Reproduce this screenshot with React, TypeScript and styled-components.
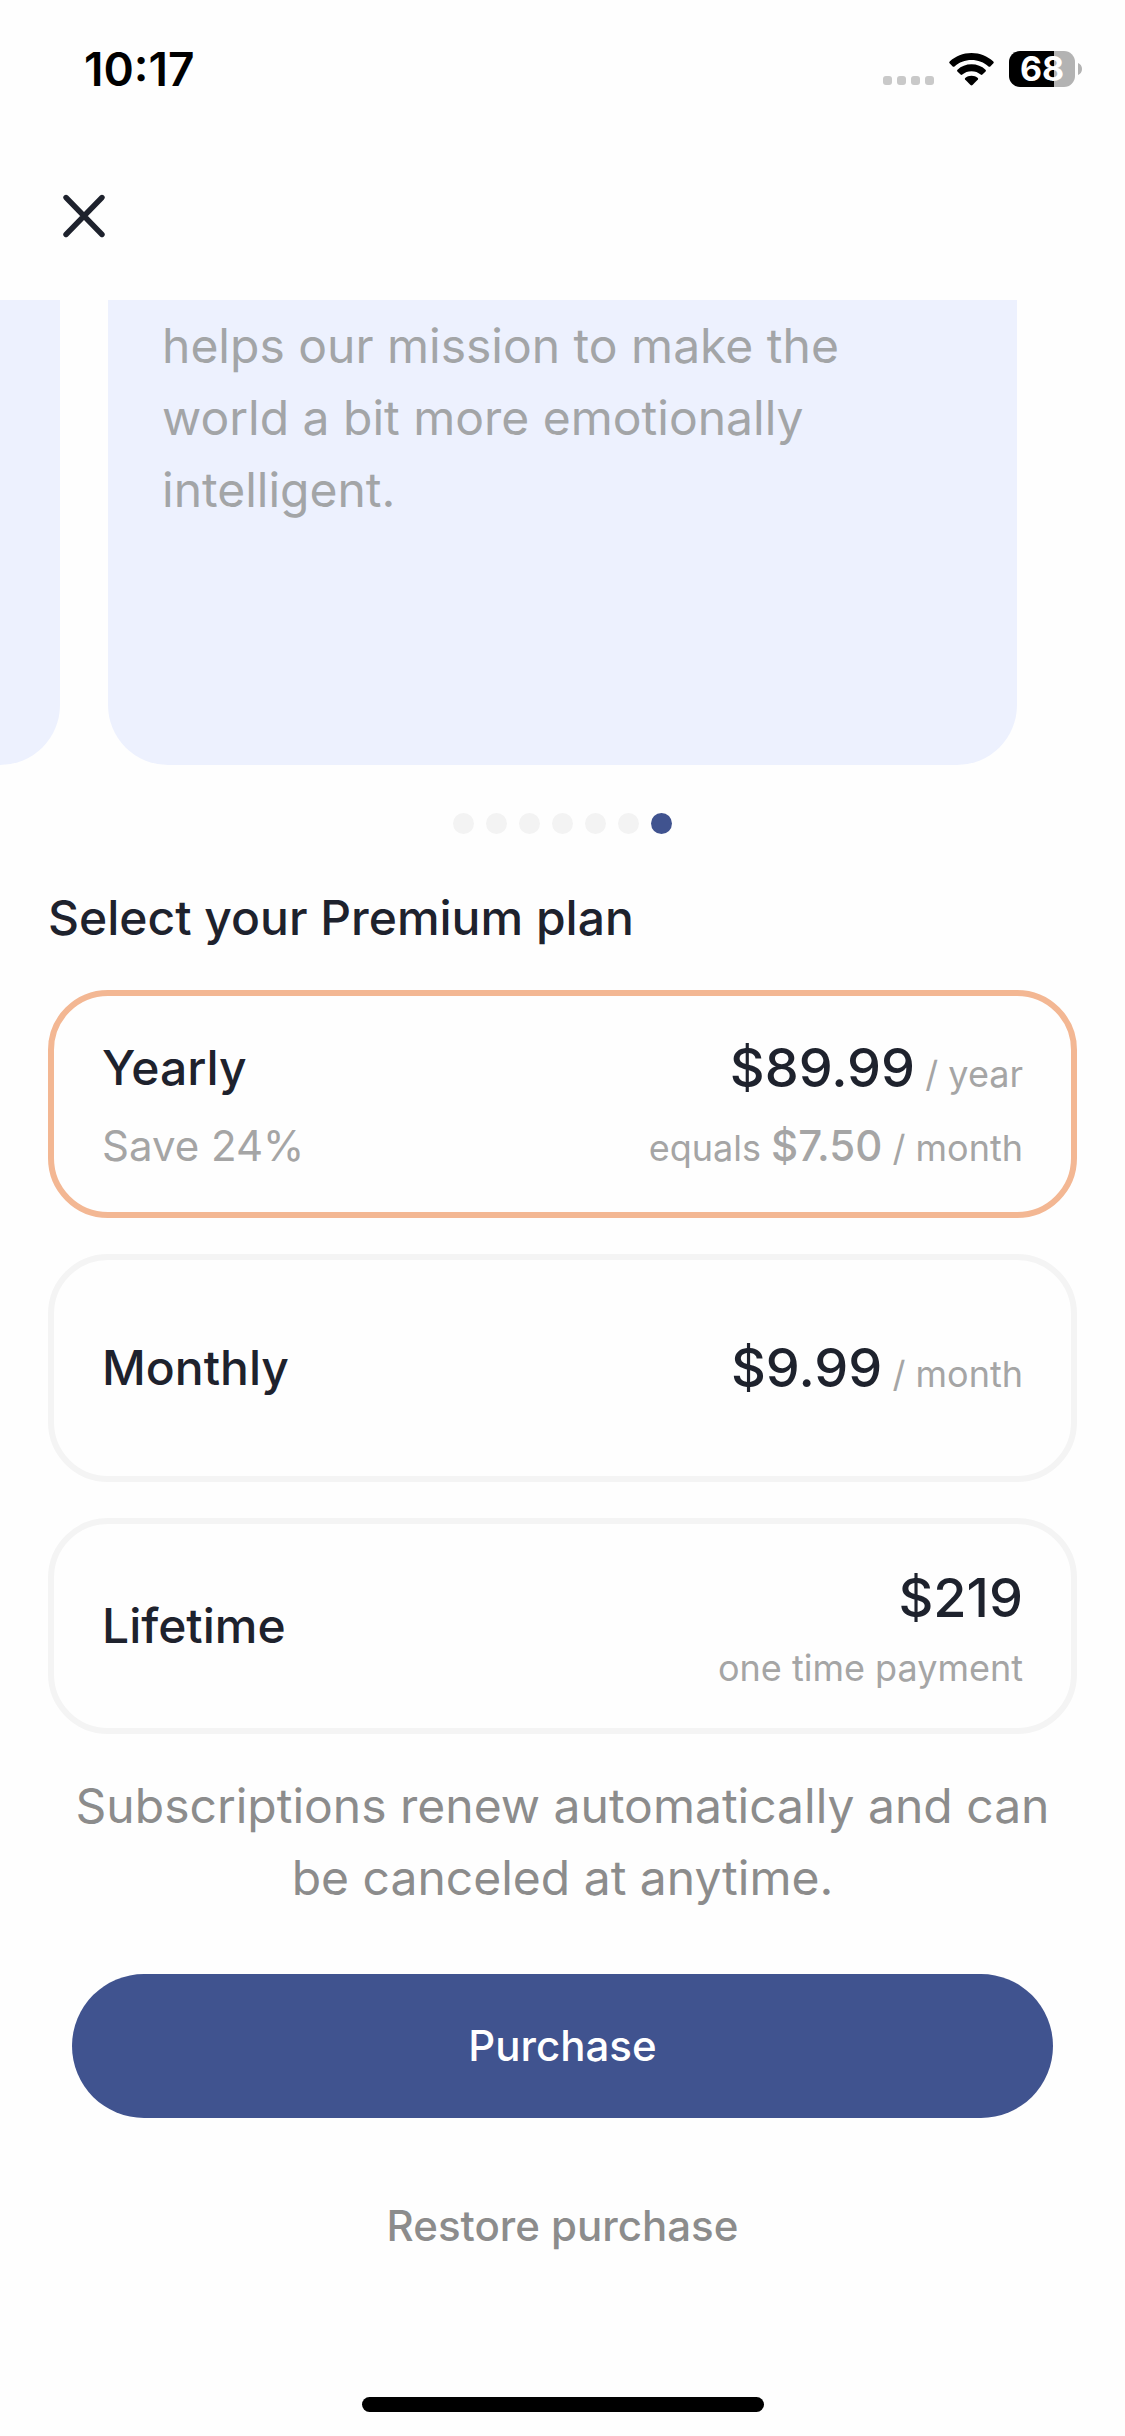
import React, { useState } from "react";
import styled, { createGlobalStyle } from "styled-components";

const color = {
  ink: "#1e222d",
  text: "#8c8c8c",
  muted: "#a5a5a5",
  line: "#f4f4f4",
  dot: "#f3f3f3",
  tint: "#edf1fe",
  primary: "#40538f",
  accent: "#f3b793",
};

const GlobalStyle = createGlobalStyle`
  * { box-sizing: border-box; }
  body { margin: 0; background: #fefefe; }
  body, button, input {
    font-family: Inter, "Liberation Sans", sans-serif;
    font-optical-sizing: none;
  }
`;

const Screen = styled.div`
  display: flex;
  flex-direction: column;
  min-height: 100vh;
  color: ${color.ink};
`;

const StatusBar = styled.header`
  display: flex;
  align-items: center;
  justify-content: space-between;
  height: 138px;
  padding: 0 43px 0 84px;
`;

const Clock = styled.time`
  font-size: 46px;
  line-height: 54px;
  font-weight: 600;
  color: #000;
`;

const StatusIcons = styled.div`
  display: flex;
  align-items: center;
  gap: 15px;
`;

const Signal = styled.div`
  display: flex;
  align-self: flex-end;
  gap: 5px;
  padding-bottom: 2px;
`;

const SignalDot = styled.span`
  width: 9px;
  height: 9px;
  border-radius: 3px;
  background: #c9c9c9;
`;

const Battery = styled.div`
  display: flex;
  align-items: center;
  gap: 3px;
`;

const BatteryCell = styled.div<{ $level: number }>`
  width: 66px;
  height: 36px;
  border-radius: 11px;
  background: linear-gradient(to right, #000 ${(p) => p.$level}%, #b3b3b3 ${(p) => p.$level}%);
  color: #fff;
  font-size: 34px;
  line-height: 36px;
  font-weight: 700;
  text-align: center;
`;

const NavBar = styled.nav`
  display: flex;
  align-items: center;
  height: 162px;
  padding: 0 48px 6px;
`;

const CloseButton = styled.button`
  display: flex;
  align-items: center;
  justify-content: center;
  width: 72px;
  height: 72px;
  padding: 0;
  border: 0;
  background: none;
  color: ${color.ink};
`;

const Carousel = styled.section`
  display: flex;
  justify-content: flex-end;
  gap: 48px;
  padding: 0 108px;
  overflow: hidden;
`;

const BenefitCard = styled.article`
  flex: 0 0 100%;
  min-height: 465px;
  padding: 10px 54px 48px;
  border-radius: 0 0 60px 60px;
  background: ${color.tint};
`;

const BenefitText = styled.p`
  margin: 0;
  color: #a3a5a7;
  font-size: 48px;
  line-height: 72px;
  font-weight: 400;
`;

const Pagination = styled.div`
  display: flex;
  justify-content: center;
  gap: 12px;
  padding: 48px 0;
`;

const PageDot = styled.button<{ $active: boolean }>`
  width: 21px;
  height: 21px;
  padding: 0;
  border: 0;
  border-radius: 50%;
  background: ${(p) => (p.$active ? color.primary : color.dot)};
`;

const Plans = styled.fieldset`
  display: flex;
  flex-direction: column;
  gap: 36px;
  margin: 0;
  padding: 0 48px;
  border: 0;
`;

const PlansTitle = styled.legend`
  padding: 0 0 36px;
  font-size: 48px;
  line-height: 72px;
  font-weight: 500;
`;

const PlanCard = styled.label<{ $selected: boolean; $compact: boolean }>`
  position: relative;
  display: flex;
  align-items: center;
  justify-content: space-between;
  min-height: ${(p) => (p.$compact ? 216 : 228)}px;
  padding: 30px 48px;
  border: 6px solid ${(p) => (p.$selected ? color.accent : color.line)};
  border-radius: 60px;
`;

const PlanRadio = styled.input`
  position: absolute;
  inset: 0;
  width: 100%;
  height: 100%;
  margin: 0;
  opacity: 0;
`;

const PlanSide = styled.div<{ $end?: boolean }>`
  display: flex;
  flex-direction: column;
  gap: 12px;
  text-align: ${(p) => (p.$end ? "right" : "left")};
`;

const PlanName = styled.span`
  font-size: 48px;
  line-height: 72px;
  font-weight: 500;
`;

const PlanNote = styled.span`
  color: ${color.muted};
  font-size: 42px;
  line-height: 60px;
  font-weight: 400;
`;

const Price = styled.span`
  font-size: 54px;
  line-height: 72px;
  font-weight: 500;
`;

const SubPrice = styled.span`
  color: ${color.muted};
  font-size: 42px;
  line-height: 60px;
  font-weight: 500;
`;

const Small = styled.span`
  color: ${color.muted};
  font-size: 36px;
  line-height: 44px;
  font-weight: 400;
`;

const Terms = styled.p`
  margin: 0;
  padding: 36px 72px 60px;
  color: ${color.text};
  font-size: 48px;
  line-height: 72px;
  font-weight: 400;
  text-align: center;
`;

const Actions = styled.div`
  display: flex;
  flex-direction: column;
  gap: 36px;
  padding: 0 72px;
`;

const ActionButton = styled.button<{ $primary?: boolean }>`
  height: 144px;
  padding: 0;
  border: 0;
  border-radius: 72px;
  background: ${(p) => (p.$primary ? color.primary : "transparent")};
  color: ${(p) => (p.$primary ? "#fff" : color.text)};
  font-size: 42px;
  line-height: 60px;
  font-weight: 500;
`;

const HomeIndicator = styled.div`
  align-self: center;
  width: 402px;
  height: 15px;
  margin-top: auto;
  margin-bottom: 24px;
  border-radius: 8px;
  background: #000;
`;

const WifiIcon = () => (
  <svg width="45" height="33" viewBox="0 0 45 33" aria-hidden="true">
    <path d="M22.500 0C31 0 38.500 3.200 44.300 8.500C44.900 9.100 44.900 9.800 44.400 10.300L41.300 13.400C40.800 13.900 40.100 13.900 39.500 13.400C34.900 9.200 29 6.900 22.500 6.900S10.100 9.200 5.500 13.400C4.900 13.900 4.200 13.900 3.700 13.400L.6 10.300C.1 9.800.1 9.100.7 8.500C6.500 3.200 14 0 22.500 0Z" />
    <path d="M22.500 11.300C27.900 11.300 32.800 13.300 36.500 16.700C37.100 17.300 37.100 17.900 36.600 18.400L33.400 21.600C32.900 22.100 32.300 22.100 31.700 21.600C29.200 19.400 26 18.200 22.500 18.200S15.800 19.400 13.300 21.600C12.700 22.100 12.100 22.100 11.600 21.600L8.400 18.400C7.900 17.900 7.900 17.300 8.500 16.700C12.200 13.300 17.100 11.300 22.500 11.300Z" />
    <path d="M22.500 22.700C25 22.700 27.100 23.500 28.800 24.900C29.300 25.400 29.300 26 28.900 26.500L23.500 32.100C22.900 32.700 22.100 32.700 21.500 32.100L16.100 26.500C15.700 26 15.700 25.400 16.200 24.900C17.900 23.500 20 22.700 22.500 22.700Z" />
  </svg>
);

const BatteryCap = () => (
  <svg width="4" height="12" viewBox="0 0 4 12" aria-hidden="true">
    <path d="M0 0C2.500 1 4 3.200 4 6S2.500 11 0 12Z" fill="#b3b3b3" />
  </svg>
);

const CloseIcon = () => (
  <svg width="48" height="48" viewBox="0 0 48 48" fill="none" aria-hidden="true">
    <path d="M6 5.500L42 42.500M42 5.500L6 42.500" stroke="currentColor" strokeWidth="5.400" strokeLinecap="round" />
  </svg>
);

const pages = [1, 2, 3, 4, 5, 6, 7];

const plans = [
  {
    id: "yearly",
    name: "Yearly",
    note: "Save 24%",
    price: "$89.99",
    per: " / year",
    monthly: "$7.50",
  },
  { id: "monthly", name: "Monthly", price: "$9.99", per: " / month" },
  { id: "lifetime", name: "Lifetime", price: "$219", caption: "one time payment" },
];

export default function App() {
  const [page, setPage] = useState(7);
  const [selected, setSelected] = useState("yearly");

  return (
    <Screen>
      <GlobalStyle />
      <StatusBar>
        <Clock>10:17</Clock>
        <StatusIcons>
          <Signal>
            <SignalDot />
            <SignalDot />
            <SignalDot />
            <SignalDot />
          </Signal>
          <WifiIcon />
          <Battery>
            <BatteryCell $level={68}>68</BatteryCell>
            <BatteryCap />
          </Battery>
        </StatusIcons>
      </StatusBar>
      <NavBar>
        <CloseButton aria-label="Close">
          <CloseIcon />
        </CloseButton>
      </NavBar>
      <Carousel>
        <BenefitCard />
        <BenefitCard>
          <BenefitText>helps our mission to make the world a bit more emotionally intelligent.</BenefitText>
        </BenefitCard>
      </Carousel>
      <Pagination>
        {pages.map((n) => (
          <PageDot key={n} $active={n === page} aria-label={`Page ${n}`} onClick={() => setPage(n)} />
        ))}
      </Pagination>
      <Plans>
        <PlansTitle>Select your Premium plan</PlansTitle>
        {plans.map((plan) => (
          <PlanCard key={plan.id} $selected={plan.id === selected} $compact={Boolean(plan.caption)}>
            <PlanRadio
              type="radio"
              name="plan"
              checked={plan.id === selected}
              onChange={() => setSelected(plan.id)}
            />
            <PlanSide>
              <PlanName>{plan.name}</PlanName>
              {plan.note && <PlanNote>{plan.note}</PlanNote>}
            </PlanSide>
            <PlanSide $end>
              <Price>
                {plan.price}
                {plan.per && <Small>{plan.per}</Small>}
              </Price>
              {plan.monthly && (
                <SubPrice>
                  <Small>equals </Small>
                  {plan.monthly}
                  <Small> / month</Small>
                </SubPrice>
              )}
              {plan.caption && <Small>{plan.caption}</Small>}
            </PlanSide>
          </PlanCard>
        ))}
      </Plans>
      <Terms>Subscriptions renew automatically and can be canceled at anytime.</Terms>
      <Actions>
        <ActionButton $primary>Purchase</ActionButton>
        <ActionButton>Restore purchase</ActionButton>
      </Actions>
      <HomeIndicator />
    </Screen>
  );
}
